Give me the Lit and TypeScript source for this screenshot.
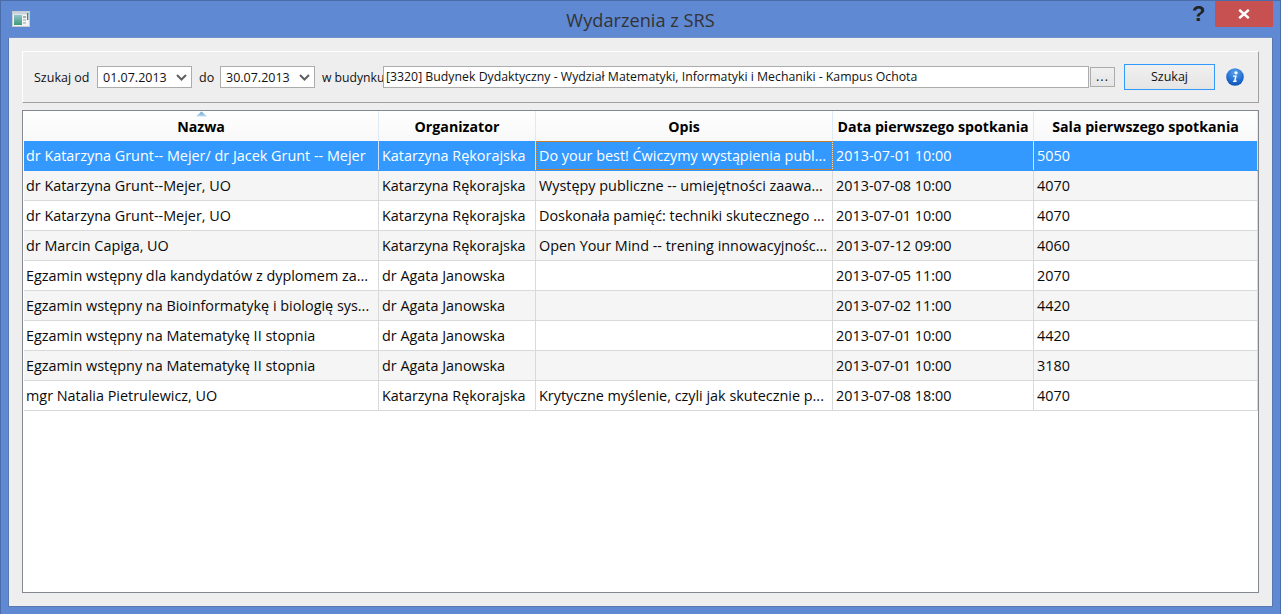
import { LitElement, html, css } from "lit";
import { customElement } from "lit/decorators.js";

const ROWS: string[][] = [
  ["dr Katarzyna Grunt-- Mejer/ dr Jacek Grunt -- Mejer", "Katarzyna Rękorajska", "Do your best! Ćwiczymy wystąpienia publ...", "2013-07-01 10:00", "5050"],
  ["dr Katarzyna Grunt--Mejer, UO", "Katarzyna Rękorajska", "Występy publiczne -- umiejętności zaawa...", "2013-07-08 10:00", "4070"],
  ["dr Katarzyna Grunt--Mejer, UO", "Katarzyna Rękorajska", "Doskonała pamięć: techniki skutecznego ...", "2013-07-01 10:00", "4070"],
  ["dr Marcin Capiga, UO", "Katarzyna Rękorajska", "Open Your Mind -- trening innowacyjnośc...", "2013-07-12 09:00", "4060"],
  ["Egzamin wstępny dla kandydatów z dyplomem za...", "dr Agata Janowska", "", "2013-07-05 11:00", "2070"],
  ["Egzamin wstępny na Bioinformatykę i biologię sys...", "dr Agata Janowska", "", "2013-07-02 11:00", "4420"],
  ["Egzamin wstępny na Matematykę II stopnia", "dr Agata Janowska", "", "2013-07-01 10:00", "4420"],
  ["Egzamin wstępny na Matematykę II stopnia", "dr Agata Janowska", "", "2013-07-01 10:00", "3180"],
  ["mgr Natalia Pietrulewicz, UO", "Katarzyna Rękorajska", "Krytyczne myślenie, czyli jak skutecznie p...", "2013-07-08 18:00", "4070"],
];
const HEAD = ["Nazwa", "Organizator", "Opis", "Data pierwszego spotkania", "Sala pierwszego spotkania"];

@customElement("app-root")
export class AppRoot extends LitElement {
  static styles = css`
    :host { display: block; width: 1281px; height: 614px; overflow: hidden; font-family: "Open Sans", "Noto Sans", sans-serif; }
    .win { box-sizing: border-box; width: 1281px; height: 614px; background: #5f89d2; border: 1px solid #4a6ca8; border-bottom: 0; display: flex; flex-direction: column; }
    .title { height: 36px; flex: none; display: flex; align-items: flex-start; position: relative; }
    .appicon { margin: 10px 0 0 11px; width: 18px; height: 16px; }
    .tt { position: absolute; left: 0; right: 0; top: 6px; text-align: center; font-size: 18.2px; line-height: 26px; color: #333; }
    .help { position: absolute; left: 1191px; top: 1px; font: bold 22px/24px "Liberation Sans", sans-serif; color: #222; }
    .close { position: absolute; left: 1214px; top: 0; width: 58px; height: 26px; background: #c75050; display: flex; align-items: center; justify-content: center; }
    .content { flex: none; height: 570px; margin: 0 7px; box-sizing: border-box; background: #eeeeee; border: 1px solid #5878b0; border-top-color: #7191ca; padding: 13px; display: flex; flex-direction: column; gap: 7px; }
    .bar { height: 52px; flex: none; box-sizing: border-box; border: 1px solid; border-color: #fff #a0a0a0 #a0a0a0 #fff; display: flex; align-items: center; padding: 0 0 0 11px; font-size: 12.5px; color: #111; }
    .lbl { white-space: nowrap; flex: none; box-sizing: border-box; }
    .l1 { width: 63px; }
    .l2 { width: 28px; padding-left: 7px; }
    .l3 { width: 68px; padding-left: 7px; font-size: 12.2px; }
    .date { box-sizing: border-box; flex: none; width: 95px; height: 22px; border: 1px solid #acacac; background: #fff; display: flex; align-items: center; justify-content: space-between; padding: 0 4px 0 5px; color: #111; }
    .building { box-sizing: border-box; flex: none; width: 706px; height: 22px; border: 1px solid #acacac; background: #fff; padding-left: 2px; font-size: 12.3px; line-height: 20px; white-space: nowrap; overflow: hidden; color: #111; }
    .dots { box-sizing: border-box; flex: none; width: 25px; height: 20px; margin-left: 1px; border: 1px solid #acacac; background: linear-gradient(#f0f0f0, #e5e5e5); text-align: center; line-height: 18px; letter-spacing: 1px; }
    .go { box-sizing: border-box; flex: none; width: 91px; height: 26px; margin-left: 9px; border: 1px solid #3399ff; background: linear-gradient(#f0f0f0, #e5e5e5); text-align: center; line-height: 24px; }
    .info { margin-left: 11px; width: 18px; height: 18px; flex: none; }
    .table { flex: 1; min-height: 0; box-sizing: border-box; border: 1px solid #828790; background: #fff; }
    .row { display: grid; grid-template-columns: 355px 157px 297px 201px 224px; height: 30px; box-sizing: border-box; font-size: 14.4px; line-height: 29px; color: #0a0a0a; border-bottom: 1px solid #d9d9d9; margin-left: 1px; }
    .row.odd { background: #f5f5f5; }
    .row.sel { background: #3399ff; color: #fff; border-bottom-color: #3399ff; }
    .cell { box-sizing: border-box; border-right: 1px solid #d9d9d9; padding: 0 3px; white-space: nowrap; overflow: hidden; }
    .cell:first-child { padding-left: 2px; }
    .row.sel .cell { border-right-color: #cfe4fa; }
    .cell.focus { outline: 1px dotted #c77f30; outline-offset: -1px; }
    .head { background: linear-gradient(#fff, #f8f8f8); border-bottom: 0; position: relative; }
    .hc { box-sizing: border-box; border-right: 1px solid #deebf7; text-align: center; font-weight: 700; font-size: 14.2px; line-height: 32px; color: #000; white-space: nowrap; overflow: hidden; }
    .arrow { position: absolute; left: 172px; top: 0; width: 11px; height: 6px; }
  `;

  render() {
    return html`<div class="win">
      <div class="title">
        <svg class="appicon" viewBox="0 0 18 16">
          <defs><linearGradient id="t" x1="0" y1="0" x2="0" y2="1"><stop offset="0" stop-color="#8fc4cc"/><stop offset="1" stop-color="#3f9a78"/></linearGradient></defs>
          <rect x="0.5" y="0.5" width="17" height="15" fill="#f2f4f4" stroke="#c8ccd0"/>
          <rect x="1" y="1" width="16" height="2.5" fill="#c9d3dc"/>
          <rect x="2" y="4" width="8" height="10" fill="url(#t)"/>
          <rect x="11" y="5" width="3" height="2" fill="#a5adb5"/><rect x="11" y="8" width="3" height="2" fill="#c4cad0"/><rect x="11" y="11" width="3" height="2" fill="#c4cad0"/>
          <rect x="15" y="2" width="1.4" height="7" fill="#3d8a86"/>
        </svg>
        <div class="tt">Wydarzenia z SRS</div>
        <div class="help">?</div>
        <div class="close"><svg width="12" height="10" viewBox="0 0 12 10"><path d="M1.2 0.8 L10.8 9.2 M10.8 0.8 L1.2 9.2" stroke="#fff" stroke-width="2.5" fill="none"/></svg></div>
      </div>
      <div class="content">
        <div class="bar">
          <span class="lbl l1">Szukaj od</span>
          <div class="date">01.07.2013 ${this.chev()}</div>
          <span class="lbl l2">do</span>
          <div class="date">30.07.2013 ${this.chev()}</div>
          <span class="lbl l3">w budynku</span>
          <div class="building">[3320] Budynek Dydaktyczny - Wydział Matematyki, Informatyki i Mechaniki - Kampus Ochota</div>
          <div class="dots">...</div>
          <div class="go">Szukaj</div>
          <svg class="info" viewBox="0 0 18 18">
            <defs><radialGradient id="g" cx="0.5" cy="0.25" r="0.8"><stop offset="0" stop-color="#5aa4ee"/><stop offset="0.7" stop-color="#1c66cf"/><stop offset="1" stop-color="#0f4ea8"/></radialGradient></defs>
            <circle cx="9" cy="9" r="8.8" fill="url(#g)"/>
            <circle cx="10" cy="4.8" r="1.6" fill="#fff"/>
            <path d="M7.2 7.5 H10.8 L9.6 12.6 H10.8 L10.4 14 H6.8 L7.1 12.9 L8.1 12.6 L9 8.7 H7 Z" fill="#fff"/>
          </svg>
        </div>
        <div class="table">
          <div class="row head">
            ${HEAD.map((h) => html`<div class="hc">${h}</div>`)}
            <svg class="arrow" viewBox="0 0 11 6"><defs><linearGradient id="a" x1="0" y1="0" x2="0" y2="1"><stop offset="0" stop-color="#5f9fc8"/><stop offset="1" stop-color="#bfe0f2"/></linearGradient></defs><path d="M5.5 0.5 L11 5.5 H0 Z" fill="url(#a)"/></svg>
          </div>
          ${ROWS.map((r, i) => html`<div class="row ${i === 0 ? "sel" : ""} ${i % 2 ? "odd" : ""}">
            ${r.map((c, j) => html`<div class="cell ${i === 0 && j === 2 ? "focus" : ""}">${c}</div>`)}
          </div>`)}
        </div>
      </div>
    </div>`;
  }

  chev() {
    return html`<svg width="11" height="7" viewBox="0 0 11 7"><path d="M1 1 L5.5 5.5 L10 1" stroke="#606060" stroke-width="2" fill="none"/></svg>`;
  }
}
